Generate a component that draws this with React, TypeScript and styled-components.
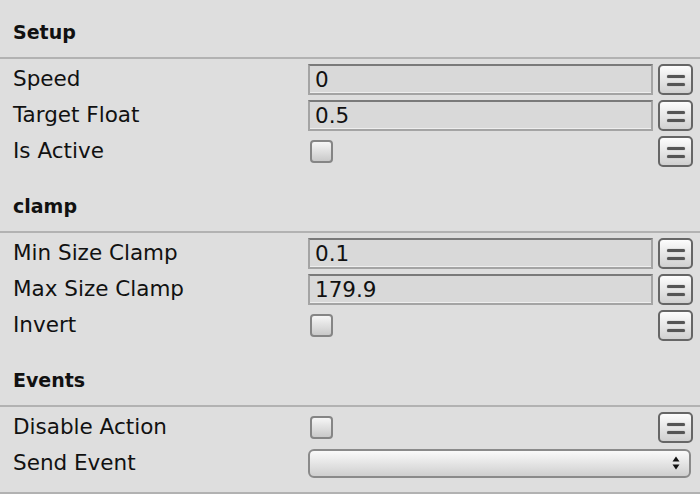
import React from "react";
import styled, { createGlobalStyle } from "styled-components";

const GlobalStyle = createGlobalStyle`
  html, body { margin: 0; padding: 0; background: #dedede; }
  body { font-family: "DejaVu Sans", "Liberation Sans", sans-serif; color: #111; }
  * { box-sizing: border-box; }
`;

const Inspector = styled.div`
  width: 700px;
  height: 494px;
  overflow: hidden;
  background: #dedede;
  display: flex;
  flex-direction: column;
`;

const Section = styled.section`
  display: flex;
  flex-direction: column;
`;

const Header = styled.div`
  height: 59px;
  padding: 6px 0 0 13px;
  display: flex;
  align-items: center;
  font-weight: bold;
  font-size: 19px;
  border-bottom: 2px solid #b2b2b2;
`;

const Rows = styled.div`
  display: flex;
  flex-direction: column;
  padding: 2px 0 5px;
`;

const Row = styled.div`
  height: 36px;
  display: grid;
  grid-template-columns: 295px 1fr;
  align-items: center;
  padding: 0 7px 0 13px;
`;

const Label = styled.div`
  font-size: 21.5px;
  line-height: 36px;
  white-space: nowrap;
`;

const Control = styled.div`
  display: flex;
  align-items: center;
  gap: 5px;
  min-width: 0;
`;

const Field = styled.div`
  flex: 1;
  height: 31px;
  background: #d9d9d9;
  border: 2px solid #a4a4a4;
  border-top-color: #7a7a7a;
  box-shadow: inset 0 -1px 0 #eeeeee;
  font-size: 21.5px;
  line-height: 27px;
  padding-left: 5px;
`;

const Spacer = styled.div`
  flex: 1;
`;

const Checkbox = styled.div`
  width: 23px;
  height: 23px;
  margin-left: 2px;
  border: 2px solid #858585;
  border-radius: 4px;
  background: linear-gradient(#f6f6f6, #c9c9c9);
`;

const MenuButton = styled.div`
  width: 35px;
  height: 31px;
  border: 2px solid #666;
  border-radius: 5px;
  background: linear-gradient(#fdfdfd, #d0d0d0);
  display: flex;
  flex-direction: column;
  align-items: center;
  justify-content: center;
  gap: 5px;
  padding-top: 3px;
`;

const Bar = styled.div`
  width: 18px;
  height: 3px;
  border-radius: 2px;
  background: #555;
  box-shadow: 0 0 1px #777;
`;

const Select = styled.div`
  flex: 1;
  height: 29px;
  margin-right: 2px;
  border: 2px solid #8a8a8a;
  border-radius: 6px;
  background: linear-gradient(#fafafa, #cfcfcf);
  display: flex;
  align-items: center;
  justify-content: flex-end;
  padding-right: 9px;
`;

const FinalRule = styled.div`
  margin-top: 6px;
  border-bottom: 2px solid #b2b2b2;
`;

const Menu = () => (
  <MenuButton>
    <Bar />
    <Bar />
  </MenuButton>
);

type FieldDef =
  | { label: string; kind: "value"; value: string }
  | { label: string; kind: "check" }
  | { label: string; kind: "select" };

const sections: { title: string; fields: FieldDef[] }[] = [
  {
    title: "Setup",
    fields: [
      { label: "Speed", kind: "value", value: "0" },
      { label: "Target Float", kind: "value", value: "0.5" },
      { label: "Is Active", kind: "check" },
    ],
  },
  {
    title: "clamp",
    fields: [
      { label: "Min Size Clamp", kind: "value", value: "0.1" },
      { label: "Max Size Clamp", kind: "value", value: "179.9" },
      { label: "Invert", kind: "check" },
    ],
  },
  {
    title: "Events",
    fields: [
      { label: "Disable Action", kind: "check" },
      { label: "Send Event", kind: "select" },
    ],
  },
];

const Arrows = () => (
  <svg width="8" height="14" viewBox="0 0 8 14">
    <path d="M4 0.5 L7.5 5.5 L0.5 5.5 Z" fill="#111" />
    <path d="M4 13.5 L7.5 8.5 L0.5 8.5 Z" fill="#111" />
  </svg>
);

export default function App() {
  return (
    <>
      <GlobalStyle />
      <Inspector>
        {sections.map((s) => (
          <Section key={s.title}>
            <Header>{s.title}</Header>
            <Rows>
              {s.fields.map((f) => (
                <Row key={f.label}>
                  <Label>{f.label}</Label>
                  <Control>
                    {f.kind === "value" && (
                      <>
                        <Field>{f.value}</Field>
                        <Menu />
                      </>
                    )}
                    {f.kind === "check" && (
                      <>
                        <Checkbox />
                        <Spacer />
                        <Menu />
                      </>
                    )}
                    {f.kind === "select" && (
                      <Select>
                        <Arrows />
                      </Select>
                    )}
                  </Control>
                </Row>
              ))}
            </Rows>
          </Section>
        ))}
        <FinalRule />
      </Inspector>
    </>
  );
}
